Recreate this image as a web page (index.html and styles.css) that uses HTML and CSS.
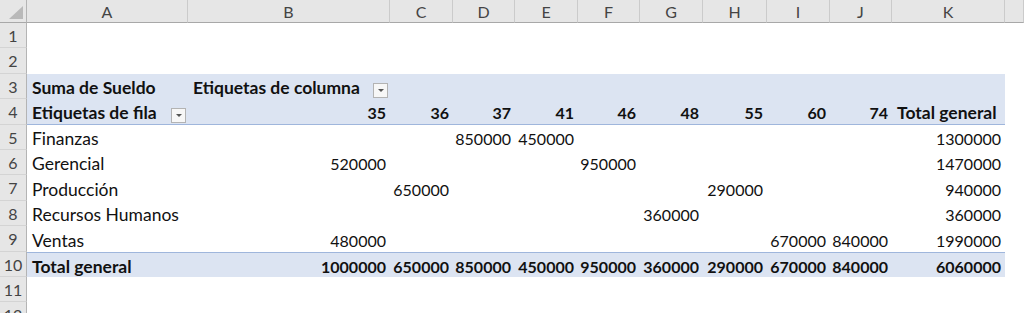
FILE: index.html
```html
<!DOCTYPE html>
<html>
<head>
  <title>Tabla dinámica - Suma de Sueldo</title>
  <link rel="stylesheet" href="styles.css">
</head>
<body>
  <div class="sheet">
    <div class="row cols">
      <div class="corner"><span class="tri"></span></div>
      <div>A</div><div>B</div><div>C</div><div>D</div><div>E</div><div>F</div>
      <div>G</div><div>H</div><div>I</div><div>J</div><div>K</div><div></div>
    </div>

    <div class="row">
      <div class="n">1</div>
      <div></div><div></div><div></div><div></div><div></div><div></div>
      <div></div><div></div><div></div><div></div><div></div><div></div>
    </div>

    <div class="row tall">
      <div class="n">2</div>
      <div></div><div></div><div></div><div></div><div></div><div></div>
      <div></div><div></div><div></div><div></div><div></div><div></div>
    </div>

    <div class="row">
      <div class="n">3</div>
      <div class="c pv b">Suma de Sueldo</div>
      <div class="c pv b split">Etiquetas de columna <span class="drop"></span></div>
      <div class="c pv"></div><div class="c pv"></div><div class="c pv"></div><div class="c pv"></div>
      <div class="c pv"></div><div class="c pv"></div><div class="c pv"></div><div class="c pv"></div>
      <div class="c pv"></div>
      <div></div>
    </div>

    <div class="row tall">
      <div class="n">4</div>
      <div class="c pv hd b split">Etiquetas de fila <span class="drop"></span></div>
      <div class="c pv hd b r">35</div>
      <div class="c pv hd b r">36</div>
      <div class="c pv hd b r">37</div>
      <div class="c pv hd b r">41</div>
      <div class="c pv hd b r">46</div>
      <div class="c pv hd b r">48</div>
      <div class="c pv hd b r">55</div>
      <div class="c pv hd b r">60</div>
      <div class="c pv hd b r">74</div>
      <div class="c pv hd b">Total general</div>
      <div></div>
    </div>

    <div class="row">
      <div class="n">5</div>
      <div class="c">Finanzas</div>
      <div class="c"></div><div class="c"></div>
      <div class="c r">850000</div>
      <div class="c r">450000</div>
      <div class="c"></div><div class="c"></div><div class="c"></div><div class="c"></div><div class="c"></div>
      <div class="c r">1300000</div>
      <div></div>
    </div>

    <div class="row">
      <div class="n">6</div>
      <div class="c">Gerencial</div>
      <div class="c r">520000</div>
      <div class="c"></div><div class="c"></div><div class="c"></div>
      <div class="c r">950000</div>
      <div class="c"></div><div class="c"></div><div class="c"></div><div class="c"></div>
      <div class="c r">1470000</div>
      <div></div>
    </div>

    <div class="row tall">
      <div class="n">7</div>
      <div class="c">Producción</div>
      <div class="c"></div>
      <div class="c r">650000</div>
      <div class="c"></div><div class="c"></div><div class="c"></div><div class="c"></div>
      <div class="c r">290000</div>
      <div class="c"></div><div class="c"></div>
      <div class="c r">940000</div>
      <div></div>
    </div>

    <div class="row">
      <div class="n">8</div>
      <div class="c">Recursos Humanos</div>
      <div class="c"></div><div class="c"></div><div class="c"></div><div class="c"></div><div class="c"></div>
      <div class="c r">360000</div>
      <div class="c"></div><div class="c"></div><div class="c"></div>
      <div class="c r">360000</div>
      <div></div>
    </div>

    <div class="row tall">
      <div class="n">9</div>
      <div class="c">Ventas</div>
      <div class="c r">480000</div>
      <div class="c"></div><div class="c"></div><div class="c"></div><div class="c"></div><div class="c"></div><div class="c"></div>
      <div class="c r">670000</div>
      <div class="c r">840000</div>
      <div class="c r">1990000</div>
      <div></div>
    </div>

    <div class="row">
      <div class="n">10</div>
      <div class="c pv tot b">Total general</div>
      <div class="c pv tot b r">1000000</div>
      <div class="c pv tot b r">650000</div>
      <div class="c pv tot b r">850000</div>
      <div class="c pv tot b r">450000</div>
      <div class="c pv tot b r">950000</div>
      <div class="c pv tot b r">360000</div>
      <div class="c pv tot b r">290000</div>
      <div class="c pv tot b r">670000</div>
      <div class="c pv tot b r">840000</div>
      <div class="c pv tot b r">6060000</div>
      <div></div>
    </div>

    <div class="row">
      <div class="n">11</div>
      <div></div><div></div><div></div><div></div><div></div><div></div>
      <div></div><div></div><div></div><div></div><div></div><div></div>
    </div>

    <div class="row">
      <div class="n">12</div>
      <div></div><div></div><div></div><div></div><div></div><div></div>
      <div></div><div></div><div></div><div></div><div></div><div></div>
    </div>
  </div>
</body>
</html>
```

FILE: styles.css
```css
body {
  margin: 0;
  font-family: Lato, "Liberation Sans", sans-serif;
  font-size: 16px;
  color: #111;
  background: #fff;
}
.sheet {
  width: 1024px;
  height: 313px;
  overflow: hidden;
}
.row {
  display: grid;
  grid-template-columns: 27px 161px 202px 63px 62px 63px 62px 63px 64px 63px 62px 113px 1fr;
  height: 25px;
}
.row.tall {
  height: 26px;
}
.row > div {
  box-sizing: border-box;
  white-space: nowrap;
}
.cols {
  height: 23px;
  background: #e6e6e6;
  color: #444;
}
.cols > div {
  display: flex;
  align-items: center;
  justify-content: center;
  border-right: 1px solid #cbcbcb;
  border-bottom: 1px solid #a8a8a8;
}
.corner {
  justify-content: flex-end !important;
  align-items: flex-end !important;
  padding: 0 3px 3px 0;
  border-right: 1px solid #b4b4b4 !important;
}
.tri {
  width: 14px;
  height: 13px;
  background: #b9b9b9;
  clip-path: polygon(100% 0, 100% 100%, 0 100%);
}
.n {
  display: flex;
  align-items: center;
  justify-content: center;
  background: #e6e6e6;
  color: #444;
  border-right: 1px solid #b4b4b4;
  border-bottom: 1px solid #d4d4d4;
}
.c {
  display: flex;
  align-items: center;
  padding: 2px 5px 0;
  font-size: 17.5px;
}
.r {
  justify-content: flex-end;
  padding-right: 4px;
  font-size: 16px;
}
.b {
  font-weight: bold;
}
.pv {
  background: #dce4f2;
}
.hd {
  border-bottom: 1px solid #9fb6dc;
}
.tot {
  border-top: 1px solid #9fb6dc;
}
.split {
  justify-content: space-between;
  padding-right: 2px;
}
.drop {
  align-self: flex-end;
  margin-bottom: 1px;
  width: 15px;
  height: 15px;
  box-sizing: border-box;
  border: 1px solid #b3b3b3;
  background: #f7f7f7;
  display: flex;
  align-items: center;
  justify-content: center;
}
.drop::after {
  content: "";
  border-left: 3px solid transparent;
  border-right: 3px solid transparent;
  border-top: 3px solid #555;
}
```
